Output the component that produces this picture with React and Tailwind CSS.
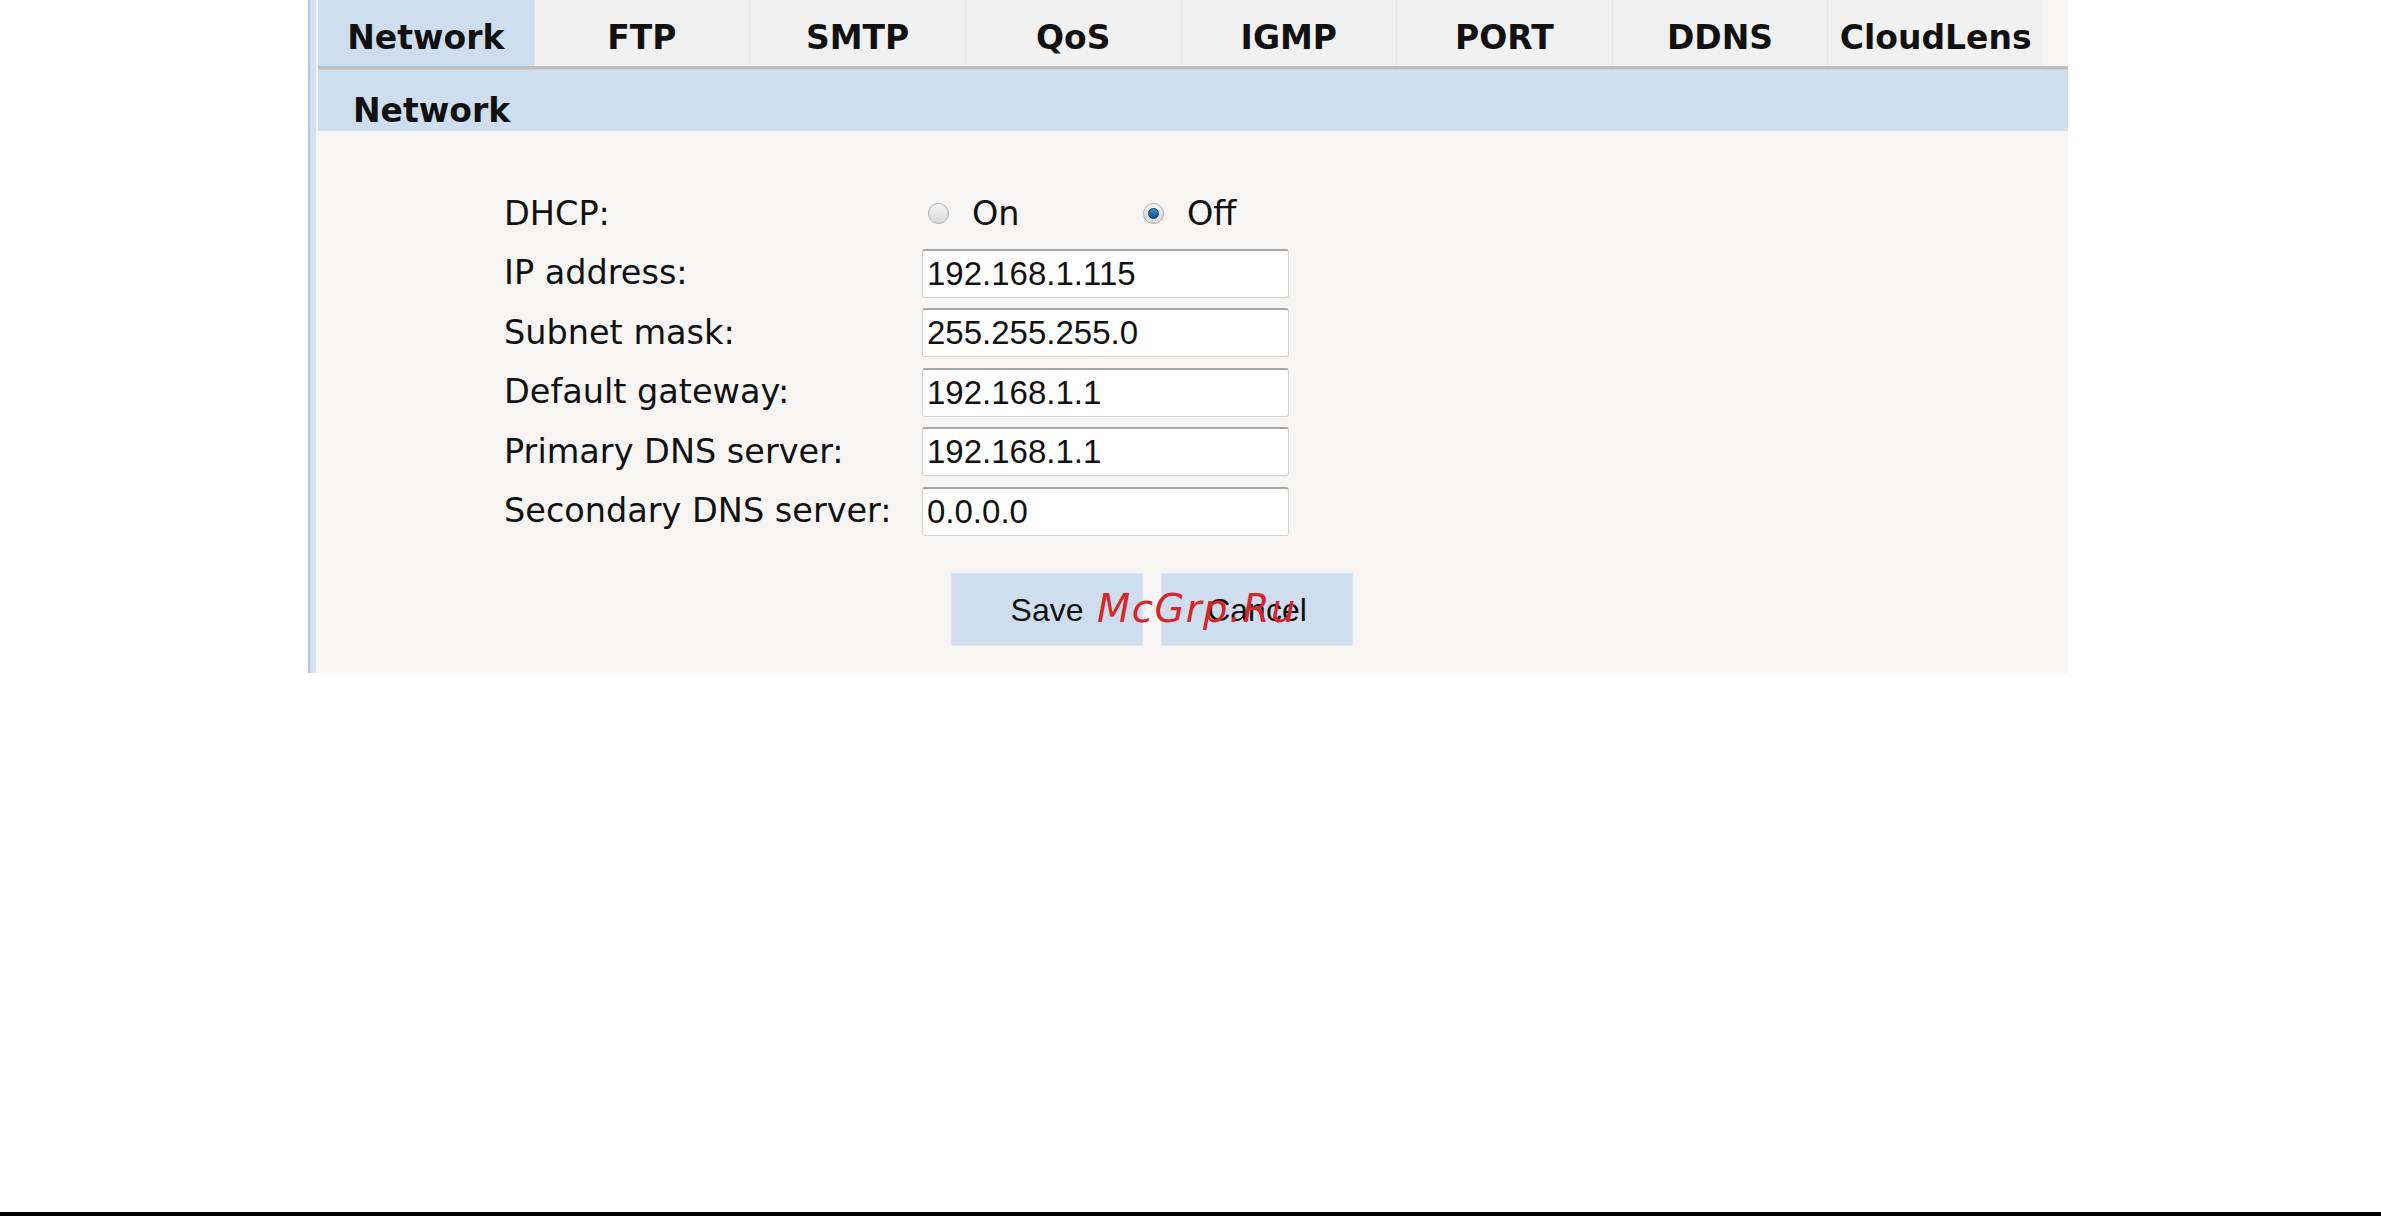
import React from 'react';

const tabs = ['Network', 'FTP', 'SMTP', 'QoS', 'IGMP', 'PORT', 'DDNS', 'CloudLens'];

const fields = [
  { label: 'IP address:', value: '192.168.1.115' },
  { label: 'Subnet mask:', value: '255.255.255.0' },
  { label: 'Default gateway:', value: '192.168.1.1' },
  { label: 'Primary DNS server:', value: '192.168.1.1' },
  { label: 'Secondary DNS server:', value: '0.0.0.0' },
];

const Radio = ({ checked }) => (
  <span className="w-[21px] h-[21px] rounded-full border border-[#a7acb2] bg-gradient-to-b from-[#f4f4f4] to-[#d9d9d9] flex items-center justify-center flex-shrink-0">
    {checked && (
      <span className="w-[11px] h-[11px] rounded-full bg-gradient-to-b from-[#3d8fd4] to-[#0f4f8c] border border-[#0b3a66]" />
    )}
  </span>
);

const App = () => {
  return (
    <div className="h-screen flex flex-col bg-white font-['DejaVu_Sans',sans-serif] text-[#111]">
      <div className="flex ml-[308px] w-[1760px]">
        {/* left edge strip */}
        <div className="w-[8px] flex">
          <div className="w-[2px] bg-[#b5c8dc]" />
          <div className="flex-1 bg-[#d3e1f0]" />
        </div>

        <div className="flex-1 bg-[#f6f5f4] pl-[2px] flex flex-col">
          {/* Tabs */}
          <div className="grid grid-cols-8 w-[1725px] h-[66px]">
            {tabs.map((t, i) => (
              <div
                key={t}
                className={
                  i === 0
                    ? 'bg-[#cfdeee] flex items-center justify-center pt-[9px] text-[33px] font-bold leading-none'
                    : 'bg-[#f1f1f1] border-l border-[#e7e7e7] flex items-center justify-center pt-[9px] text-[33px] font-bold leading-none'
                }
              >
                {t}
              </div>
            ))}
          </div>
          <div className="h-[4px] bg-[#bdbdbd] border-b border-[#cfcfcf]" />

          {/* Section header */}
          <div className="h-[61px] bg-[#cfdeee] flex items-center pl-[35px] pt-[19px] text-[33px] font-bold leading-none">
            Network
          </div>

          {/* Form */}
          <div className="pt-[58px] pl-[186px] pb-[27px] flex flex-col">
            <div className="flex flex-col gap-[10.5px]">
              <div className="flex h-[49px] items-center">
                <div className="w-[418px] text-[33.5px] leading-none">DHCP:</div>
                <div className="flex items-center pl-[6px]">
                  <div className="w-[215px] flex items-center gap-[23px]">
                    <Radio />
                    <span className="text-[33.5px] leading-none">On</span>
                  </div>
                  <div className="flex items-center gap-[23px]">
                    <Radio checked />
                    <span className="text-[33.5px] leading-none">Off</span>
                  </div>
                </div>
              </div>

              {fields.map((f) => (
                <div key={f.label} className="flex h-[49px] items-center">
                  <div className="w-[418px] text-[33.5px] leading-none">{f.label}</div>
                  <input
                    readOnly
                    defaultValue={f.value}
                    className="w-[367px] h-[49px] bg-white border border-[#d2d2d2] border-t-2 border-t-[#a6a6a6] rounded-[3px] pl-[4px] text-[33px] font-['Liberation_Sans',sans-serif] text-[#111] outline-none"
                  />
                </div>
              ))}
            </div>

            {/* Buttons */}
            <div className="relative flex gap-[18px] ml-[447px] mt-[37.5px]">
              <button className="w-[192px] h-[73px] bg-[#cfdeee] border border-[#dce7f3] text-[32px] font-['Liberation_Sans',sans-serif] text-[#111]">
                Save
              </button>
              <button className="w-[192px] h-[73px] bg-[#cfdeee] border border-[#dce7f3] text-[32px] font-['Liberation_Sans',sans-serif] text-[#111]">
                Cancel
              </button>
              <span className="absolute left-[146px] top-[17px] text-[38.5px] leading-none italic tracking-[1.5px] text-[#d7262b] font-['DejaVu_Sans',sans-serif]">
                McGrp.Ru
              </span>
            </div>
          </div>
        </div>
      </div>

      <div className="flex-1" />
      <div className="h-[4px] bg-black" />
    </div>
  );
};

export default App;
